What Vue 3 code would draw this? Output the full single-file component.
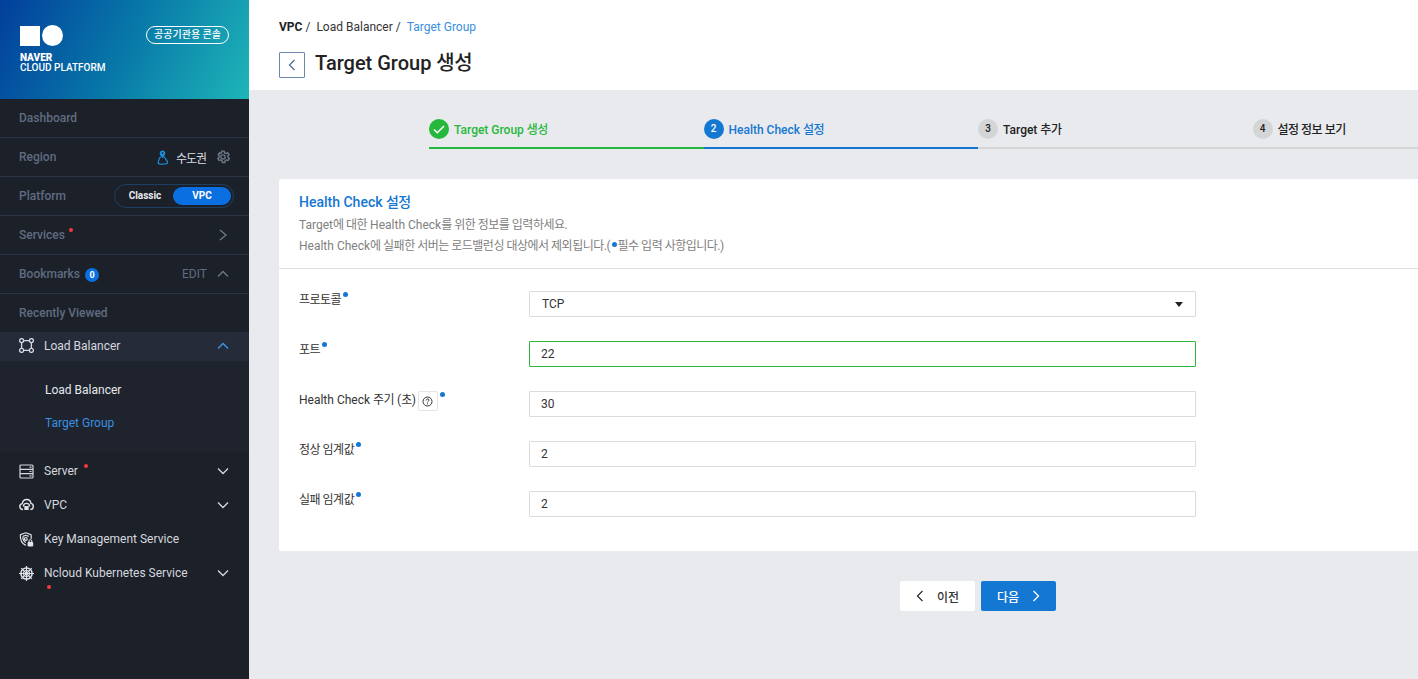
<template>
  <div class="layout">
    <aside class="sidebar">
      <div class="brand">
        <div class="logo">
          <div class="logo-marks"><span class="mark-square"></span><span class="mark-circle"></span></div>
          <div class="logo-text"><strong>NAVER</strong><span>CLOUD PLATFORM</span></div>
        </div>
        <div class="console-badge">공공기관용 콘솔</div>
      </div>

      <div class="side-row">Dashboard</div>
      <div class="side-row">
        <span>Region</span>
        <div class="region">
          <svg class="map-icon" width="12" height="15" viewBox="0 0 12 15" fill="none">
            <path d="M3.500 6.500C2 9 .8 11 1.200 13c.3 1.300 2 1.400 4.300 1.200 2.500-.2 4.700-.4 5-1.400.3-1.600-1.500-3.300-2.500-4.800L7 6.500" stroke="#1d8fd8" stroke-width="1.200"/>
            <path d="M5.500.4C3.900.4 2.700 1.600 2.700 3.200c0 1.800 1.600 3.200 2.800 5.400 1.100-2.200 2.800-3.600 2.800-5.400C8.300 1.600 7.100.4 5.500.4z" fill="#1d8fd8"/>
            <circle cx="5.500" cy="3.100" r=".9" fill="#1c2029"/>
          </svg>
          <span class="region-name">수도권</span>
          <svg width="14" height="14" viewBox="0 0 24 24" fill="none" stroke="#6f7a8b" stroke-width="2.300">
            <circle cx="12" cy="12" r="3.600"/>
            <path d="M10 2h4l.7 3 2.300 1 2.700-1.500 2.700 3.200-2 2.300.3 2.500 2.300 2-2.300 3.500-2.900-1-2 1.400-.8 3h-4l-.8-3-2-1.400-2.900 1-2.300-3.500 2.300-2 .3-2.500-2-2.300 2.700-3.200L7 6l2.300-1z"/>
          </svg>
        </div>
      </div>
      <div class="side-row">
        <span>Platform</span>
        <div class="platform-toggle">
          <span class="toggle-item">Classic</span>
          <span class="toggle-item on">VPC</span>
        </div>
      </div>
      <div class="side-row">
        <span class="with-dot">Services<i class="red-dot services-dot"></i></span>
        <svg class="chev services-chev" width="8" height="12" viewBox="0 0 8 12"><path d="M1 1l6 5-6 5" /></svg>
      </div>
      <div class="side-row">
        <span class="bookmarks">Bookmarks<b class="count">0</b></span>
        <div class="bookmark-right">
          <span class="edit">EDIT</span>
          <svg class="chev" width="12" height="8" viewBox="0 0 12 8"><path d="M1 6.500 6 1.500l5 5" /></svg>
        </div>
      </div>
      <div class="side-row recent">Recently Viewed</div>

      <div class="menu-item active">
        <svg class="menu-icon" width="15" height="15" viewBox="0 0 15 15" fill="none" stroke="#d5d8de" stroke-width="1.300">
          <circle cx="2.600" cy="2.600" r="2"/><circle cx="12.400" cy="2.600" r="2"/>
          <circle cx="2.600" cy="12.400" r="2"/><circle cx="12.400" cy="12.400" r="2"/>
          <path d="M4.600 2.600h5.800M4.600 12.400h5.800M2.600 4.600v5.800M12.400 4.600v5.800"/>
        </svg>
        <span class="menu-label">Load Balancer</span>
        <svg class="chev blue" width="12" height="8" viewBox="0 0 12 8"><path d="M1 6.500 6 1.500l5 5" /></svg>
      </div>
      <div class="submenu">
        <div class="sub-item">Load Balancer</div>
        <div class="sub-item current">Target Group</div>
      </div>

      <div class="menu-list">
        <div class="menu-item">
          <svg class="menu-icon" width="15" height="15" viewBox="0 0 15 15" fill="none" stroke="#d5d8de" stroke-width="1.200">
            <rect x="1" y="1" width="13" height="13" rx="1"/>
            <path d="M1 5.300h13M1 9.700h13M10.500 3.200h2M10.500 7.500h2M10.500 11.800h2"/>
          </svg>
          <span class="menu-label">Server<i class="red-dot server-dot"></i></span>
          <svg class="chev light" width="12" height="8" viewBox="0 0 12 8"><path d="M1 1.500 6 6.500l5-5" /></svg>
        </div>
        <div class="menu-item">
          <svg class="menu-icon" width="15" height="14" viewBox="0 0 15 14" fill="none" stroke="#e2e4e8" stroke-width="1.400">
            <path d="M4 11.500C2 11.500.8 10.200.8 8.500c0-1.500 1-2.700 2.400-2.900C3.600 3.200 5.400 1.500 7.600 1.500c2.300 0 4 1.600 4.400 3.900 1.400.3 2.300 1.500 2.300 3.100 0 1.700-1.200 3-3 3"/>
            <path d="M4.400 8.500a3.100 3.100 0 0 1 6.200 0"/>
            <rect x="5.300" y="8" width="4.400" height="4" rx=".6" fill="#e2e4e8" stroke="none"/>
          </svg>
          <span class="menu-label">VPC</span>
          <svg class="chev light" width="12" height="8" viewBox="0 0 12 8"><path d="M1 1.500 6 6.500l5-5" /></svg>
        </div>
        <div class="menu-item">
          <svg class="menu-icon" width="15" height="15" viewBox="0 0 15 15" fill="none" stroke="#e2e4e8" stroke-width="1.200">
            <path d="M6.800.8 12 2.600c.3 1.600.3 3 0 4.300M6.800.8 1.400 2.600c-.4 5.300 1.400 9 5.400 10.800"/>
            <path d="M3.900 4.400 6.800 3.300l2.900 1.100M3.900 4.400c-.1 2.800.8 5 2.900 6.200"/>
            <circle cx="6.800" cy="6.900" r="1.400"/>
            <rect x="8.600" y="9.800" width="5.600" height="4.600" rx="1.200" fill="#e2e4e8" stroke="none"/>
            <path d="M10 9.900V9a1.400 1.400 0 0 1 2.800 0v.9" stroke-width="1"/>
          </svg>
          <span class="menu-label">Key Management Service</span>
        </div>
        <div class="menu-item">
          <svg class="menu-icon" width="15" height="15" viewBox="0 0 15 15" fill="none" stroke="#e2e4e8" stroke-width="1.100">
            <circle cx="7.500" cy="7.500" r="5.600" stroke-width="1.500"/>
            <circle cx="7.500" cy="7.500" r="3.200" stroke-width="1"/>
            <circle cx="7.500" cy="7.500" r="1" fill="#e2e4e8"/>
            <path d="M7.500 0v15M0 7.500h15M2.200 2.200l10.600 10.600M12.800 2.200 2.200 12.800"/>
          </svg>
          <span class="menu-label">Ncloud Kubernetes Service<i class="red-dot nks-dot"></i></span>
          <svg class="chev light" width="12" height="8" viewBox="0 0 12 8"><path d="M1 1.500 6 6.500l5-5" /></svg>
        </div>
      </div>
    </aside>

    <main class="content">
      <header class="page-head">
        <div class="crumbs">
          <b>VPC</b><span class="sep">/</span>
          <span>Load Balancer</span><span class="sep">/</span>
          <span class="crumb-now">Target Group</span>
        </div>
        <div class="title-row">
          <button class="back-btn">
            <svg width="8" height="12" viewBox="0 0 8 12"><path d="M6.500 1 1.500 6l5 5" /></svg>
          </button>
          <h1>Target Group <span class="ko">생성</span></h1>
        </div>
      </header>

      <div class="body">
        <div class="steps">
          <div v-for="s in steps" :key="s.no" class="step" :class="s.state">
            <span class="step-no">
              <svg v-if="s.state === 'done'" width="12" height="9" viewBox="0 0 12 9"><path d="M1 4.500 4.300 7.800 11 1" /></svg>
              <template v-else>{{ s.no }}</template>
            </span>
            <span class="step-name">{{ s.name }}<span class="ko">{{ s.ko }}</span></span>
          </div>
        </div>

        <section class="card">
          <div class="card-head">
            <h2>Health Check <span class="ko">설정</span></h2>
            <p>Target<span class="ko">에 대한</span> Health Check<span class="ko">를 위한 정보를 입력하세요.</span></p>
            <p>Health Check<span class="ko">에 실패한 서버는 로드밸런싱 대상에서 제외됩니다.</span>(<i class="req-inline"></i><span class="ko">필수 입력 사항입니다.</span>)</p>
          </div>
          <div class="form">
            <div class="field">
              <label><span class="ko">프로토콜</span><i class="req"></i></label>
              <div class="control select">TCP<span class="caret"></span></div>
            </div>
            <div class="field">
              <label><span class="ko">포트</span><i class="req"></i></label>
              <div class="control focus">22</div>
            </div>
            <div class="field">
              <label><span>Health Check <span class="ko">주기</span> (<span class="ko">초</span>)</span><span class="help">
                  <svg width="11" height="11" viewBox="0 0 11 11" fill="none" stroke="#333" stroke-width="1">
                    <circle cx="5.500" cy="5.500" r="4.500"/>
                    <path d="M4 4.500c0-2 3-2 3-.3 0 1-1.500 1-1.500 2.300"/>
                    <path d="M5.500 7.300v1"/>
                  </svg>
                </span><i class="req"></i></label>
              <div class="control">30</div>
            </div>
            <div class="field">
              <label><span class="ko">정상 임계값</span><i class="req"></i></label>
              <div class="control">2</div>
            </div>
            <div class="field">
              <label><span class="ko">실패 임계값</span><i class="req"></i></label>
              <div class="control">2</div>
            </div>
          </div>
        </section>

        <div class="actions">
          <button class="btn prev">
            <svg width="8" height="12" viewBox="0 0 8 12"><path d="M6.500 1 1.500 6l5 5" /></svg>
            <span>이전</span>
          </button>
          <button class="btn next">
            <span>다음</span>
            <svg width="8" height="12" viewBox="0 0 8 12"><path d="M1.500 1l5 5-5 5" /></svg>
          </button>
        </div>
      </div>
    </main>
  </div>
</template>

<script setup>
  const steps = [
    { no: 1, name: 'Target Group ', ko: '생성', state: 'done' },
    { no: 2, name: 'Health Check ', ko: '설정', state: 'now' },
    { no: 3, name: 'Target ', ko: '추가', state: '' },
    { no: 4, name: '', ko: '설정 정보 보기', state: '' }
  ]
</script>

<style>
  html, body {
    margin: 0;
    height: 100%;
    overflow: hidden;
  }
</style>

<style scoped>
  .layout {
    display: flex;
    width: 1418px;
    height: 679px;
    overflow: hidden;
    font-family: Roboto, "Noto Sans CJK KR", sans-serif;
    font-size: 12px;
    color: #333;
    background: #e9eaee;
  }

  .ko {
    letter-spacing: -.5px;
  }

  .sidebar {
    flex: 0 0 249px;
    background: #1c2029;
    color: #5f6c80;
    font-weight: 500;
  }

  .brand {
    height: 99px;
    box-sizing: border-box;
    padding: 25px 20px 0;
    display: flex;
    justify-content: space-between;
    background: linear-gradient(115deg, #023f9c 0%, #0878a8 50%, #1eb5b8 100%);
  }

  .logo-marks {
    display: flex;
    align-items: center;
    gap: 2px;
  }

  .mark-square {
    width: 20px;
    height: 20px;
    background: #fff;
  }

  .mark-circle {
    width: 21px;
    height: 21px;
    border-radius: 50%;
    background: #fff;
  }

  .logo-text {
    margin-top: 7px;
    display: flex;
    flex-direction: column;
    font-size: 10px;
    line-height: 10px;
    color: #fff;
    font-weight: 500;
    white-space: nowrap;
  }

  .logo-text strong {
    font-weight: 900;
  }

  .console-badge {
    height: 18px;
    box-sizing: border-box;
    margin: 1px 0 0 0;
    padding: 0 7px;
    border: 1px solid #fff;
    border-radius: 9px;
    font-size: 10px;
    font-weight: 500;
    line-height: 15px;
    color: #fff;
    white-space: nowrap;
  }

  .side-row {
    height: 39px;
    box-sizing: border-box;
    padding: 0 19px;
    display: flex;
    align-items: center;
    justify-content: space-between;
    border-bottom: 1px solid #2b3444;
  }

  .side-row.recent {
    height: 38px;
    border-bottom: 0;
  }

  .region {
    display: flex;
    align-items: center;
  }

  .region-name {
    margin: 0 10px 0 7px;
    color: #d8dbe0;
    font-weight: 400;
    letter-spacing: -1px;
  }

  .platform-toggle {
    display: flex;
    box-sizing: border-box;
    width: 120px;
    height: 24px;
    margin-right: -4px;
    padding: 2px;
    border: 1px solid #1d3f63;
    border-radius: 12px;
    font-size: 10px;
    font-weight: 700;
    color: #e8eaee;
  }

  .toggle-item {
    flex: 1;
    text-align: center;
    line-height: 18px;
  }

  .toggle-item.on {
    flex: 0 0 58px;
    background: #0a6fe0;
    border-radius: 10px;
    color: #fff;
  }

  .with-dot {
    position: relative;
  }

  .red-dot {
    position: absolute;
    width: 4px;
    height: 4px;
    border-radius: 50%;
    background: #f03b3b;
  }

  .services-dot {
    left: 50px;
    top: 0;
  }

  .server-dot {
    left: 40px;
    top: 0;
  }

  .nks-dot {
    left: 3px;
    top: 19px;
  }

  .chev path {
    fill: none;
    stroke: #6f7a8b;
    stroke-width: 1.300;
  }

  .services-chev {
    margin-right: 3px;
  }

  .chev.blue path {
    stroke: #3b97ec;
  }

  .chev.light path {
    stroke: #d5d8de;
  }

  .count {
    display: inline-block;
    width: 14px;
    height: 14px;
    margin-left: 5px;
    border-radius: 50%;
    background: #0a6fe0;
    color: #fff;
    font-size: 9px;
    line-height: 14px;
    text-align: center;
  }

  .bookmark-right {
    display: flex;
    align-items: center;
    gap: 10px;
    margin-right: 1px;
  }

  .edit {
    font-weight: 400;
  }

  .menu-item {
    display: flex;
    align-items: center;
    height: 34px;
    box-sizing: border-box;
    padding: 0 20px 0 19px;
    color: #d5d8de;
    font-weight: 400;
  }

  .menu-item.active {
    height: 29px;
    padding-bottom: 2px;
    background: #262b3a;
  }

  .menu-list {
    padding-top: 2px;
  }

  .menu-icon {
    flex: 0 0 15px;
    margin-right: 10px;
  }

  .menu-label {
    flex: 1;
    position: relative;
  }

  .submenu {
    height: 91px;
    box-sizing: border-box;
    padding: 13px 0 0 45px;
    background: #1e232d;
    font-weight: 400;
    color: #e6e8ec;
  }

  .sub-item {
    height: 33px;
    line-height: 33px;
  }

  .sub-item.current {
    color: #3a8fe0;
  }

  .content {
    flex: 1;
    min-width: 0;
    overflow: hidden;
    display: flex;
    flex-direction: column;
  }

  .page-head {
    height: 90px;
    box-sizing: border-box;
    padding: 19px 30px 0;
    background: #fff;
  }

  .crumbs {
    display: flex;
    height: 16px;
    line-height: 16px;
    color: #333;
  }

  .crumbs b {
    font-weight: 700;
    color: #222;
  }

  .sep {
    margin: 0 6px 0 3px;
  }

  .crumb-now {
    color: #3a8fe0;
  }

  .title-row {
    display: flex;
    align-items: center;
    gap: 10px;
    margin-top: 15px;
  }

  .back-btn {
    width: 26px;
    height: 26px;
    padding: 0;
    box-sizing: border-box;
    display: flex;
    align-items: center;
    justify-content: center;
    border: 1px solid #6c87a8;
    border-radius: 1px;
    background: #fff;
  }

  .back-btn path {
    fill: none;
    stroke: #4a6a90;
    stroke-width: 1.200;
  }

  h1 {
    margin: 0 0 4px;
    font-size: 20px;
    line-height: 26px;
    font-weight: 500;
    color: #222;
  }

  .body {
    flex: 1;
    padding-left: 30px;
  }

  .steps {
    display: flex;
    margin: 29px 0 0 150px;
    width: 1098px;
  }

  .step {
    flex: 0 0 274.500px;
    height: 30px;
    box-sizing: border-box;
    display: flex;
    align-items: flex-start;
    gap: 5px;
    border-bottom: 2px solid #d4d5d7;
    font-weight: 500;
    color: #222;
  }

  .step-no {
    width: 20px;
    height: 20px;
    border-radius: 50%;
    background: #d4d5d7;
    font-size: 10px;
    line-height: 20px;
    text-align: center;
  }

  .step-name {
    line-height: 22px;
  }

  .step.done {
    border-color: #26b83c;
    color: #26b83c;
  }

  .step.done .step-no {
    background: #26b83c;
    display: flex;
    align-items: center;
    justify-content: center;
  }

  .step.done path {
    fill: none;
    stroke: #fff;
    stroke-width: 1.500;
  }

  .step.now {
    border-color: #1477d2;
    color: #1477d2;
  }

  .step.now .step-no {
    background: #1477d2;
    color: #fff;
  }

  .card {
    width: 1200px;
    height: 372px;
    margin-top: 30px;
    background: #fff;
    border-radius: 2px;
  }

  .card-head {
    height: 90px;
    box-sizing: border-box;
    padding: 14px 20px 0;
    border-bottom: 1px solid #e0e0e0;
  }

  h2 {
    margin: 0 0 4px;
    font-size: 14px;
    line-height: 18px;
    font-weight: 500;
    color: #1477d2;
  }

  .card-head p {
    margin: 0;
    height: 21px;
    line-height: 21px;
    color: #808080;
  }

  .req-inline {
    display: inline-block;
    width: 5px;
    height: 5px;
    margin: 0 1px 3px 1px;
    border-radius: 50%;
    background: #1477d2;
  }

  .form {
    padding: 22px 20px 0;
    display: flex;
    flex-direction: column;
    gap: 24px;
  }

  .field {
    display: flex;
    height: 26px;
  }

  label {
    flex: 0 0 230px;
    display: flex;
    align-items: flex-start;
    padding-top: 1px;
    box-sizing: border-box;
    line-height: 16px;
    color: #333;
    white-space: pre;
  }

  .req {
    width: 5px;
    height: 5px;
    margin: 0 0 0 2px;
    border-radius: 50%;
    background: #1477d2;
  }

  .help {
    width: 20px;
    height: 20px;
    box-sizing: border-box;
    margin: -1px 0 0 2px;
    display: flex;
    align-items: center;
    justify-content: center;
    border: 1px solid #e5e5e5;
    border-radius: 2px;
  }

  .control {
    width: 667px;
    height: 26px;
    box-sizing: border-box;
    padding: 0 11px;
    border: 1px solid #dcdcdc;
    border-radius: 1px;
    line-height: 25px;
    color: #333;
    position: relative;
  }

  .control.select {
    padding-left: 12px;
  }

  .control.focus {
    border-color: #2cb53f;
  }

  .caret {
    position: absolute;
    right: 12px;
    top: 10px;
    width: 0;
    height: 0;
    border-left: 4px solid transparent;
    border-right: 4px solid transparent;
    border-top: 5px solid #222;
  }

  .actions {
    display: flex;
    gap: 6px;
    margin: 30px 0 0 621px;
  }

  .btn {
    width: 75px;
    height: 30px;
    padding: 0;
    display: flex;
    align-items: center;
    justify-content: center;
    gap: 13px;
    border: 0;
    border-radius: 2px;
    font-family: inherit;
    font-size: 12px;
    font-weight: 500;
  }

  .btn path {
    fill: none;
    stroke-width: 1.300;
  }

  .prev {
    background: #fff;
    color: #333;
  }

  .prev path {
    stroke: #333;
  }

  .next {
    background: #1477d2;
    color: #fff;
  }

  .next path {
    stroke: #fff;
  }
</style>
